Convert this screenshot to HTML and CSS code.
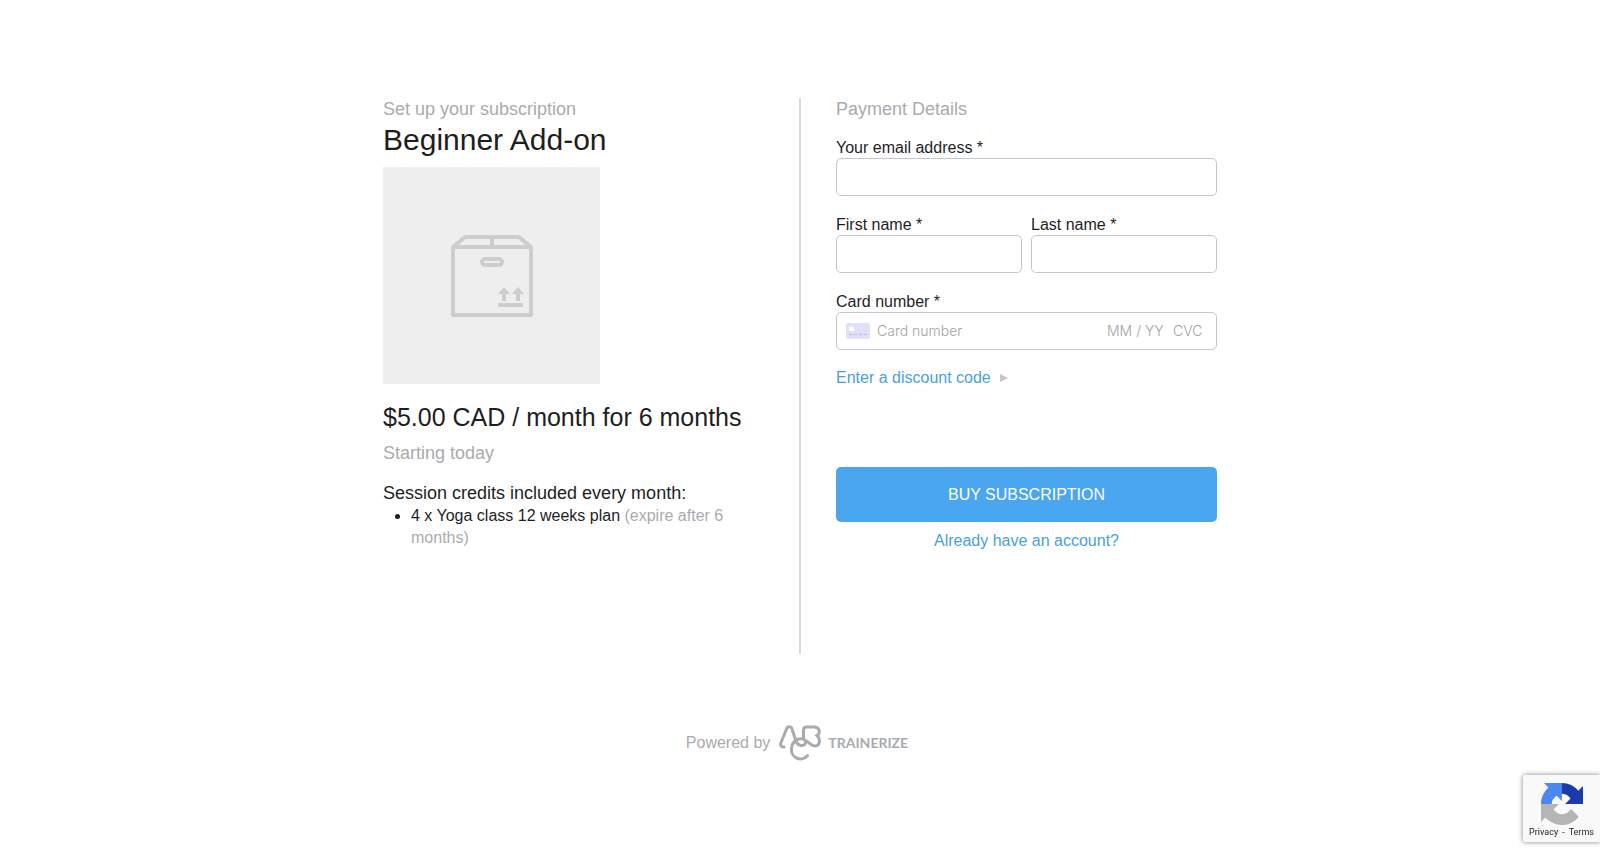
FILE: index.html
```html
<!DOCTYPE html>
<html lang="en">
<head>
<meta charset="utf-8">
<meta name="viewport" content="width=device-width, initial-scale=1">
<title>Beginner Add-on</title>
<link rel="stylesheet" href="styles.css">
</head>
<body>
<main class="checkout">
  <section class="summary">
    <p class="eyebrow">Set up your subscription</p>
    <h1 class="title">Beginner Add-on</h1>
    <div class="thumb">
      <svg class="thumb-icon" viewBox="0 0 82 82" fill="none" stroke="#cdcdcd" stroke-width="4" stroke-linejoin="round" aria-hidden="true">
        <path d="M2 12H80V80H2ZM2 12L14 2H68L80 12M41 2V12"/>
        <rect x="31" y="24" width="20" height="6" rx="3"/>
        <path d="M53 66V58M67 66V58"/>
        <path d="M47 70H72"/>
        <path d="M47 59L53 52L59 59ZM61 59L67 52L73 59Z" fill="#cdcdcd" stroke="none"/>
      </svg>
    </div>
    <p class="price">$5.00 CAD / month for 6 months</p>
    <p class="start">Starting today</p>
    <h2 class="credits-title">Session credits included every month:</h2>
    <ul class="credits">
      <li>4 x Yoga class 12 weeks plan <span class="muted">(expire after 6 months)</span></li>
    </ul>
  </section>
  <form class="payment">
    <h2 class="eyebrow">Payment Details</h2>
    <div class="fields">
      <div class="field">
        <label for="email">Your email address *</label>
        <input class="box" id="email" type="email">
      </div>
      <div class="row">
        <div class="field">
          <label for="first">First name *</label>
          <input class="box" id="first" type="text">
        </div>
        <div class="field">
          <label for="last">Last name *</label>
          <input class="box" id="last" type="text">
        </div>
      </div>
      <div class="field">
        <label for="card">Card number *</label>
        <div class="box card">
          <svg class="card-icon" viewBox="0 0 24 16" aria-hidden="true">
            <rect width="24" height="16" rx="2" fill="#e1e0f9"/>
            <rect x="3" y="4" width="5" height="4" rx="1" fill="#fff"/>
            <path d="M3 11.5H21" stroke="#c5c4ec" stroke-width="1.4" stroke-dasharray="3.6 1.2"/>
          </svg>
          <input class="card-input card-number" id="card" type="text" placeholder="Card number">
          <input class="card-input card-date" type="text" placeholder="MM / YY" aria-label="Expiry date">
          <input class="card-input card-cvc" type="text" placeholder="CVC" aria-label="CVC">
        </div>
      </div>
    </div>
    <a class="link discount" href="#">Enter a discount code
      <svg class="arrow" viewBox="0 0 8 8" aria-hidden="true"><path d="M0 0L8 4L0 8Z" fill="#c4c4c4"/></svg>
    </a>
    <button class="buy" type="submit">BUY SUBSCRIPTION</button>
    <a class="link account" href="#">Already have an account?</a>
  </form>
</main>
<footer class="powered">
  <span>Powered by</span>
  <svg class="logo" viewBox="0 0 42 36" fill="none" stroke="#a9acaf" stroke-width="3" stroke-linecap="round" aria-hidden="true">
    <path d="M5 22C2 22.500 1 20 2 17.500L7.500 4C8.500 1 12 1 13 4L17 16C18.500 21 26 22.500 26.500 17.500C26.500 15 24 13.800 22 13.800C17 13.800 12.500 18 12.500 24A9 9 0 0 0 28.500 30.500"/>
    <path d="M24.500 14V5Q24.500 2 27.500 2H35C40.500 2 42 8 38 10.500C42 14 41 21 36 21C32 21 29 16 24.500 14"/>
  </svg>
  <span class="brand">TRAINERIZE</span>
</footer>
<aside class="captcha">
  <svg class="captcha-icon" viewBox="0 0 64 64" aria-hidden="true">
    <path d="M64 31.955l-.033-1.370V4.687l-7.160 7.160C50.948 4.674 42.033.093 32.050.093c-10.400 0-19.622 4.960-25.458 12.640l11.736 11.860a15.550 15.550 0 0 1 4.754-5.334c2.050-1.600 4.952-2.906 8.968-2.906.485 0 .860.057 1.135.163 4.976.393 9.288 3.140 11.828 7.124l-8.307 8.307L64 31.953" fill="#1c3aa9"/>
    <path d="M31.862.094l-1.370.033H4.594l7.160 7.160C4.580 13.147 0 22.060 0 32.046c0 10.400 4.960 19.622 12.640 25.458L24.500 45.768a15.550 15.550 0 0 1-5.334-4.754c-1.600-2.050-2.906-4.952-2.906-8.968 0-.485.057-.860.163-1.135.393-4.976 3.140-9.288 7.124-11.828l8.307 8.307L31.860.095" fill="#4a8af0"/>
    <path d="M.001 32.045l.033 1.370v25.898l7.160-7.160c5.860 7.173 14.774 11.754 24.760 11.754 10.400 0 19.622-4.960 25.458-12.640l-11.736-11.860a15.550 15.550 0 0 1-4.754 5.334c-2.050 1.600-4.952 2.906-8.968 2.906-.485 0-.860-.057-1.135-.163-4.976-.393-9.288-3.140-11.828-7.124l8.307-8.307c-10.522.040-22.400.066-27.295-.005" fill="#b5b5b5"/>
  </svg>
  <div class="captcha-links"><a href="#">Privacy</a><span>-</span><a href="#">Terms</a></div>
</aside>
</body>
</html>
```
FILE: styles.css
```css
* { box-sizing: border-box; }
body {
  margin: 0;
  background: #fff;
  color: #1e1e1f;
  font: 16px/22px "Liberation Sans", Arial, sans-serif;
}
h1, h2, p, ul { margin: 0; font-weight: 400; }
.checkout {
  display: grid;
  grid-template-columns: 418px 1fr;
  max-width: 834px;
  min-height: 556px;
  margin: 98px auto 0;
}
.summary { padding-right: 36px; border-right: 2px solid #d9dadc; }
.payment {
  display: flex;
  flex-direction: column;
  padding-left: 35px;
}
.eyebrow { color: #a9abae; font-size: 18px; line-height: 22px; }
.title { margin: 2px 0 9px; font-size: 30px; line-height: 36px; }
.thumb {
  display: grid;
  place-items: center;
  width: 217px;
  aspect-ratio: 1;
  background: #eee;
}
.thumb-icon { width: 82px; }
.price { margin-top: 17px; font-size: 25px; line-height: 32px; }
.start { margin-top: 9px; color: #a9abae; font-size: 18px; }
.credits-title { margin-top: 18px; font-size: 18px; }
.credits { margin-top: 1px; padding-left: 28px; }
.muted { color: #a9abae; }
.fields { display: flex; flex-direction: column; gap: 19px; margin-top: 18px; }
.row { display: grid; grid-template-columns: 1fr 1fr; gap: 9px; }
.field { display: flex; flex-direction: column; min-width: 0; }
.field label { line-height: 20px; }
.box {
  width: 100%;
  height: 38px;
  padding: 0 9px;
  border: 1px solid #c4c6cd;
  border-radius: 5px;
  background: #fff;
  font: inherit;
}
.card { display: flex; align-items: center; }
.card-icon { flex: none; width: 24px; margin-right: 7px; }
.card-input {
  min-width: 0;
  padding: 0;
  border: 0;
  outline: 0;
  background: none;
  font: 300 14px/20px Inter, "Liberation Sans", sans-serif;
}
.card-input::placeholder { color: #a3a3a6; opacity: 1; }
.card-number { flex: 1; }
.card-date { width: 66px; }
.card-cvc { width: 34px; }
.link { color: #4b9fd9; text-decoration: none; }
.discount { display: flex; align-items: center; gap: 9px; margin-top: 17px; }
.arrow { width: 8px; }
.buy {
  height: 55px;
  margin-top: 78px;
  border: 0;
  border-radius: 5px;
  background: #4aa6ee;
  color: #fff;
  font: inherit;
}
.account { margin-top: 8px; text-align: center; }
.powered {
  display: flex;
  align-items: center;
  justify-content: center;
  margin-top: 71px;
  padding-right: 6px;
  color: #a9abae;
}
.logo { width: 42px; margin: 0 7px 0 9px; }
.brand { font: 700 14px/20px Lato, sans-serif; }
.captcha {
  position: fixed;
  right: 0;
  bottom: 9px;
  width: 77px;
  padding: 8px 0 3px;
  border-radius: 2px 0 0 2px;
  background: #f9f9f9;
  box-shadow: 0 0 5px #808080;
  text-align: center;
}
.captcha-icon { display: block; width: 42px; margin: 0 auto; }
.captcha-links {
  display: flex;
  justify-content: center;
  gap: 4px;
  font: 9px/14px Roboto, sans-serif;
}
.captcha-links a { color: inherit; text-decoration: none; }
```
